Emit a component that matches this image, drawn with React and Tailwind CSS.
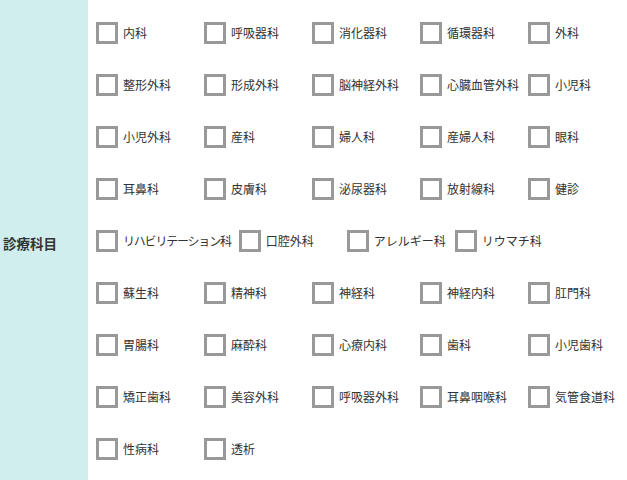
import React from 'react'

const rows = [
  ['内科', '呼吸器科', '消化器科', '循環器科', '外科'],
  ['整形外科', '形成外科', '脳神経外科', '心臓血管外科', '小児科'],
  ['小児外科', '産科', '婦人科', '産婦人科', '眼科'],
  ['耳鼻科', '皮膚科', '泌尿器科', '放射線科', '健診'],
  ['リハビリテーション科', '口腔外科', 'アレルギー科', 'リウマチ科'],
  ['蘇生科', '精神科', '神経科', '神経内科', '肛門科'],
  ['胃腸科', '麻酔科', '心療内科', '歯科', '小児歯科'],
  ['矯正歯科', '美容外科', '呼吸器外科', '耳鼻咽喉科', '気管食道科'],
  ['性病科', '透析'],
]

export default function App() {
  return (
    <div
      className="flex w-[627px] h-[480px] overflow-hidden bg-white text-[#333]"
      style={{ fontFamily: '"Noto Sans CJK JP", "Noto Sans", sans-serif' }}
    >
      <div className="w-[88px] shrink-0 bg-[#cfeeed] flex items-center pl-[3px] pt-[8px]">
        <span className="text-[13.5px] font-bold leading-none">診療科目</span>
      </div>
      <div className="flex-1 min-w-0 pl-[8px] pt-[22px] flex flex-col gap-[30px]">
        {rows.map((row, i) => (
          <div key={i} className="flex gap-x-[8px]">
            {row.map((label) => (
              <label key={label} className="flex items-center min-w-[100px] h-[22px]">
                <span className="w-[22px] h-[22px] border-[3px] border-[#999] bg-white shrink-0" />
                <span
                  className={
                    'ml-[5px] text-[12px] leading-none whitespace-nowrap ' +
                    (label === 'リハビリテーション科' ? 'tracking-[-1.2px]' : '')
                  }
                >
                  {label}
                </span>
              </label>
            ))}
          </div>
        ))}
      </div>
    </div>
  )
}
